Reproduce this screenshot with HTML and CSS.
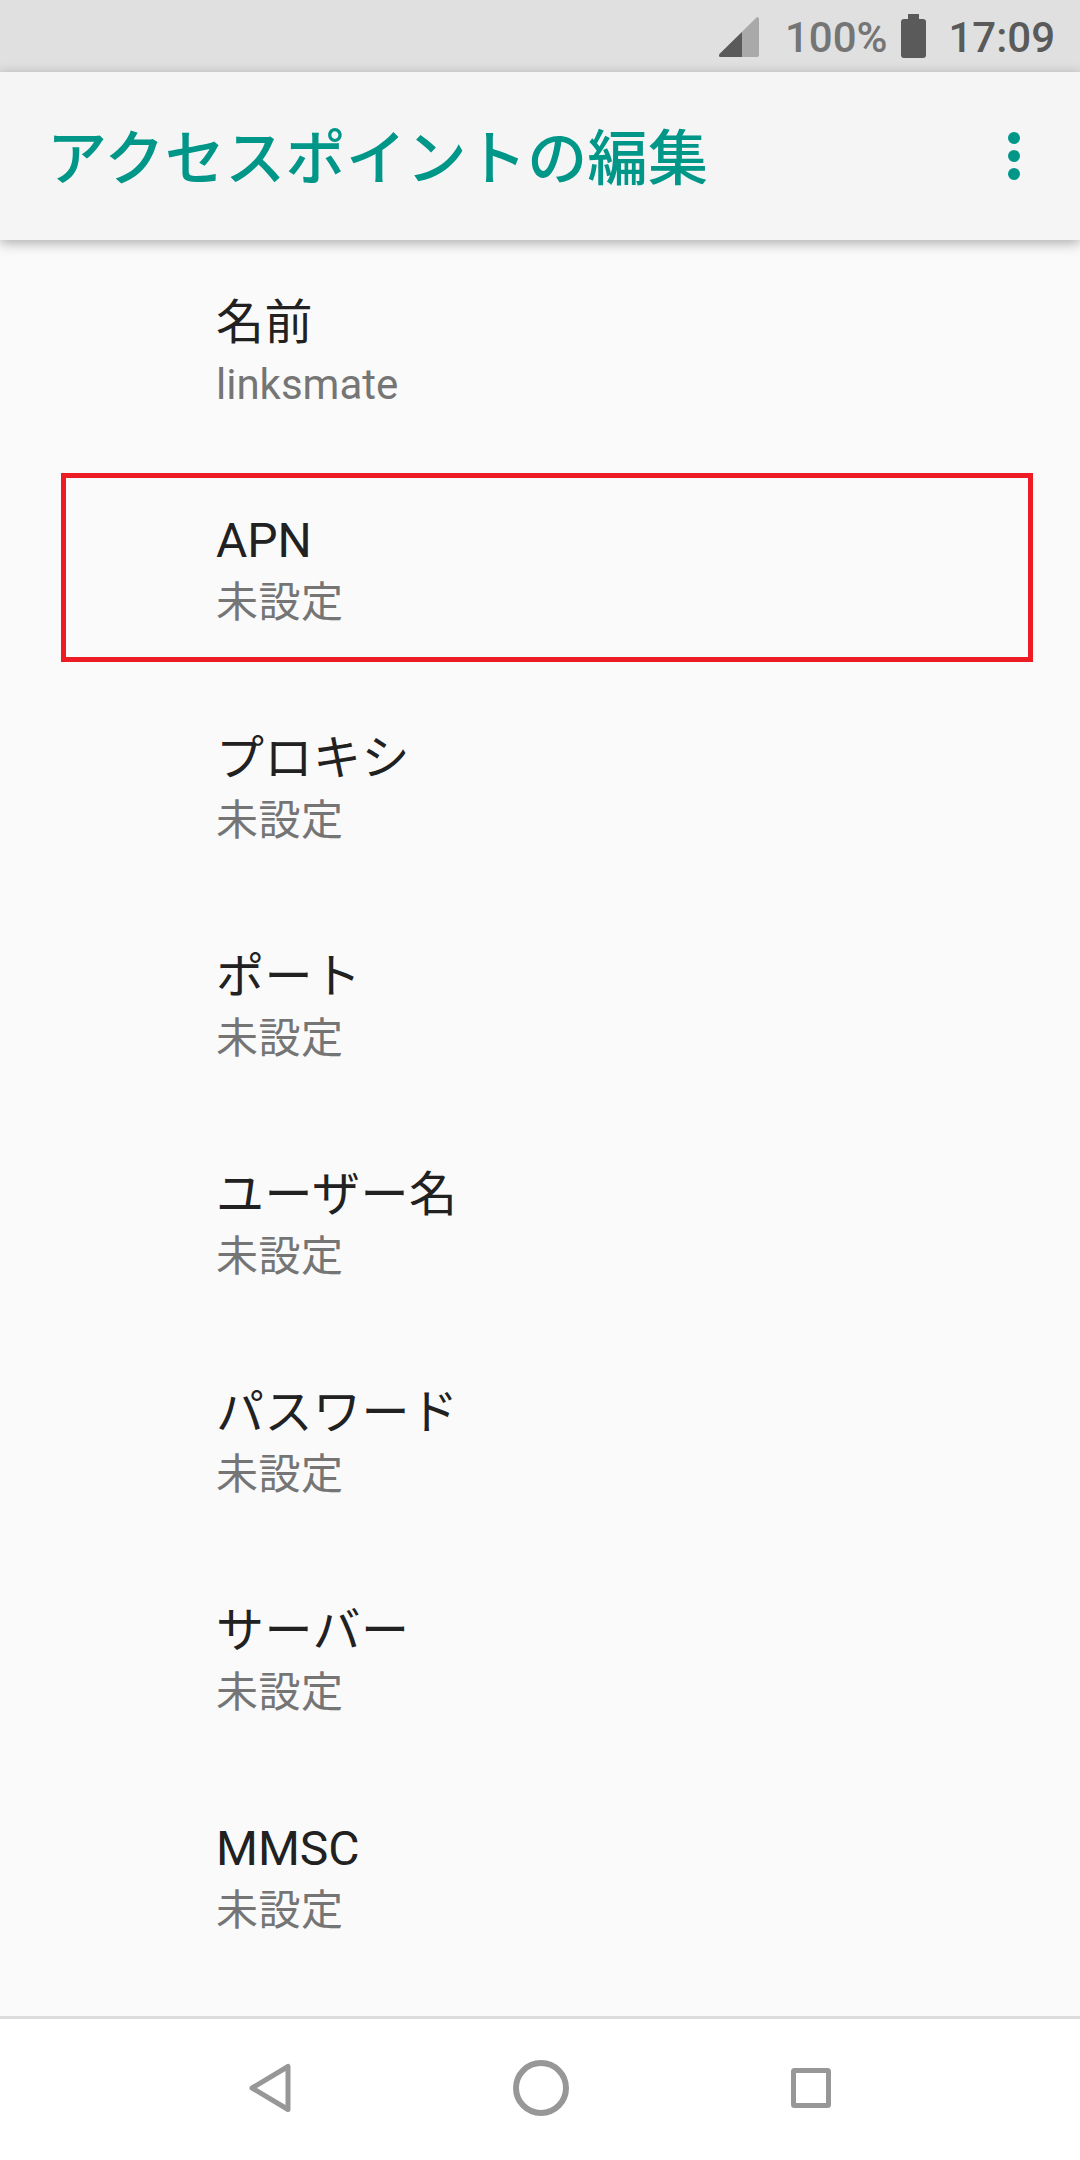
FILE: index.html
```html
<!DOCTYPE html>
<html lang="ja">
<head>
<meta charset="utf-8">
<title>アクセスポイントの編集</title>
<link rel="stylesheet" href="styles.css">
</head>
<body>
<div class="screen">
  <header class="status">
    <svg class="sig" width="40" height="40" viewBox="0 0 40 40"><path class="sig-back" d="M38 0 Q40 0 40 2 V38 Q40 40 38 40 H2 Q-1 40 .5 37 Z"/><path class="sig-front" d="M23 15 V40 H2 Q-1 40 .5 37 Z"/></svg>
    <span class="pct">100%</span>
    <svg class="bat" width="25" height="44" viewBox="0 0 25 44"><path class="bat-fill" d="M7 0 H18 V5 H22 Q25 5 25 8 V41 Q25 44 22 44 H3 Q0 44 0 41 V8 Q0 5 3 5 H7 Z"/></svg>
    <span class="time">17:09</span>
  </header>
  <div class="toolbar">
    <h1 class="title">アクセスポイントの編集</h1>
    <svg class="more" width="14" height="50" viewBox="0 0 14 50"><circle cx="7" cy="7" r="6"/><circle cx="7" cy="25" r="6"/><circle cx="7" cy="43" r="6"/></svg>
  </div>
  <main class="list">
    <div class="item"><div class="label ja">名前</div><div class="value">linksmate</div></div>
    <div class="item"><div class="label">APN</div><div class="value ja">未設定</div><div class="mark"></div></div>
    <div class="item"><div class="label ja">プロキシ</div><div class="value ja">未設定</div></div>
    <div class="item"><div class="label ja">ポート</div><div class="value ja">未設定</div></div>
    <div class="item"><div class="label ja">ユーザー名</div><div class="value ja">未設定</div></div>
    <div class="item"><div class="label ja">パスワード</div><div class="value ja">未設定</div></div>
    <div class="item"><div class="label ja">サーバー</div><div class="value ja">未設定</div></div>
    <div class="item"><div class="label">MMSC</div><div class="value ja">未設定</div></div>
  </main>
  <nav class="nav">
    <svg class="nav-i" width="42" height="50" viewBox="0 0 42 50"><path d="M39 3.5 V46.5 L3 25 Z"/></svg>
    <svg class="nav-i nav-home" width="56" height="56" viewBox="0 0 56 56"><circle cx="28" cy="28" r="25"/></svg>
    <svg class="nav-i" width="40" height="40" viewBox="0 0 40 40"><rect x="2.5" y="2.5" width="35" height="35" rx="1"/></svg>
  </nav>
</div>
</body>
</html>
```

FILE: styles.css
```css
* { box-sizing: border-box; }
html, body { margin: 0; padding: 0; }
body { font-family: Roboto, "Noto Sans CJK JP", sans-serif; }
.screen {
  width: 1080px;
  height: 2160px;
  display: flex;
  flex-direction: column;
  background: #fafafa;
  overflow: hidden;
}
.status {
  height: 72px;
  flex: none;
  background: #e0e0e0;
  display: flex;
  align-items: center;
  justify-content: flex-end;
  padding-right: 25px;
  font-size: 42px;
  font-weight: 500;
  line-height: 72px;
}
.sig { margin: 2px 26px 0 0; }
.sig-back { fill: #a9a9a9; }
.sig-front { fill: #5a5a5a; }
.pct { color: #757575; padding-top: 4px; }
.bat { margin: 0 22px 0 14px; }
.bat-fill { fill: #5a5a5a; }
.time { color: #5a5a5a; padding-top: 4px; }
.toolbar {
  height: 168px;
  flex: none;
  background: #f5f5f5;
  display: flex;
  align-items: center;
  justify-content: space-between;
  padding: 0 59px 0 47px;
  box-shadow: 0 3px 12px rgba(0, 0, 0, .32);
  position: relative;
  z-index: 1;
}
.title {
  margin: 0;
  padding-top: 8px;
  font-size: 60px;
  font-weight: 500;
  letter-spacing: .4px;
  color: #009688;
  line-height: 84px;
}
.more { fill: #009688; }
.list {
  flex: 1;
  padding-top: 4px;
}
.item {
  height: 218px;
  padding-left: 216px;
  display: flex;
  flex-direction: column;
  justify-content: center;
  position: relative;
}
.label {
  font-size: 48px;
  line-height: 62px;
  margin-bottom: 2px;
  color: #212121;
}
.value {
  font-size: 42px;
  line-height: 58px;
  color: #757575;
}
.ja { letter-spacing: .5px; }
.mark {
  position: absolute;
  left: 61px;
  top: 11px;
  width: 972px;
  height: 189px;
  border: 5px solid #ed1c24;
}
.nav {
  height: 144px;
  flex: none;
  background: #fff;
  border-top: 3px solid #dcdcdc;
  display: flex;
  align-items: center;
  justify-content: center;
  gap: 222px;
  padding-bottom: 4px;
}
.nav-i {
  fill: none;
  stroke: #979797;
  stroke-width: 5;
  stroke-linejoin: round;
}
.nav-home { stroke-width: 6; }
```
